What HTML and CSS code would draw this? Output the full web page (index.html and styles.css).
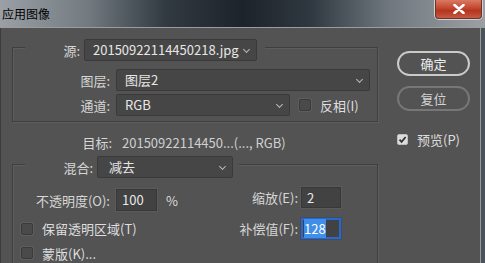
FILE: index.html
```html
<!DOCTYPE html>
<html lang="zh-CN">

<head>
  <meta charset="UTF-8">
  <title>应用图像</title>
  <link rel="stylesheet" href="styles.css">
</head>

<body>
  <div class="titlebar">
    <div class="title">应用图像</div>
    <div class="close">
      <svg width="12" height="10" viewBox="0 0 12 10">
        <path d="M1.5 1 L10.5 9 M10.5 1 L1.5 9" stroke="#fff" stroke-width="2.6" stroke-linecap="round"/>
      </svg>
    </div>
  </div>

  <div class="dialog">
    <div class="main">
      <!-- 源 -->
      <div class="group group-source">
        <div class="legend legend-source">
          <span class="label">源:</span>
          <div class="select w-source">20150922114450218.jpg<span class="arrow"></span></div>
        </div>
        <div class="row row-layer">
          <span class="label lbl-wide">图层:</span>
          <div class="select w-layer">图层2<span class="arrow"></span></div>
        </div>
        <div class="row row-channel">
          <span class="label lbl-wide">通道:</span>
          <div class="select w-channel">RGB<span class="arrow"></span></div>
          <span class="check"></span>
          <span class="check-text">反相(I)</span>
        </div>
      </div>

      <div class="row row-target">
        <span class="label lbl-target">目标:</span>
        <span class="value">20150922114450...(..., RGB)</span>
      </div>

      <!-- 混合 -->
      <div class="group group-blend">
        <div class="legend legend-blend">
          <span class="label">混合:</span>
          <div class="select w-blend">减去<span class="arrow"></span></div>
        </div>
        <div class="row row-a">
          <div class="left">
            <span class="label lbl-wide">不透明度(O):</span>
            <div class="field w-opacity">100</div>
            <span class="unit">%</span>
          </div>
          <div class="right">
            <span class="label lbl-right">缩放(E):</span>
            <div class="field w-small">2</div>
          </div>
        </div>
        <div class="row row-b">
          <div class="left">
            <span class="check"></span>
            <span class="check-text">保留透明区域(T)</span>
          </div>
          <div class="right">
            <span class="label lbl-right">补偿值(F):</span>
            <div class="field w-small focused"><span class="sel">128</span></div>
          </div>
        </div>
        <div class="row row-c">
          <div class="left">
            <span class="check"></span>
            <span class="check-text">蒙版(K)...</span>
          </div>
        </div>
      </div>
    </div>

    <div class="side">
      <div class="btn btn-ok">确定</div>
      <div class="btn btn-reset">复位</div>
      <div class="preview">
        <span class="check checked">
          <svg width="9" height="9" viewBox="0 0 9 9">
            <path d="M1.5 4.6 L3.6 6.8 L7.6 2" fill="none" stroke="#333" stroke-width="1.8"/>
          </svg>
        </span>
        <span class="check-text">预览(P)</span>
      </div>
    </div>
  </div>
</body>

</html>
```

FILE: styles.css
```css
body {
  margin: 0;
  width: 485px;
  height: 263px;
  overflow: hidden;
  background-color: #4a525b;
  font-family: "Noto Sans CJK SC", sans-serif;
  font-size: 13px;
  color: #dcdcdc;
}

.titlebar {
  display: flex;
  justify-content: space-between;
  align-items: flex-start;
  height: 27px;
  border-bottom: 1px solid #9c9c9c;
  background: linear-gradient(90deg, #9aa0a5 0%, #737b81 18%, #323a42 34%, #1d232a 50%, #2f3840 64%, #6f777e 80%, #9ba0a4 100%);
}

.title {
  padding: 6px 0 0 2px;
  font-size: 12px;
  line-height: 15px;
  color: #000;
}

.close {
  display: flex;
  justify-content: center;
  align-items: center;
  width: 45px;
  height: 18px;
  margin-right: 3px;
  border: 1px solid #6b3428;
  border-top: none;
  border-radius: 0 0 4px 4px;
  background: linear-gradient(180deg, #d87a62 0%, #c5462f 45%, #b4351f 60%, #c65b43 100%);
  box-shadow: 0 0 0 1px #cfd3d6;
}

.dialog {
  display: flex;
  width: 480px;
  height: 235px;
  background-color: #535353;
  border-right: 1px solid #9a9a9a;
  box-shadow: inset 1px 0 #3c3c3c;
}

.main {
  width: 378px;
}

.group {
  margin-left: 12px;
  width: 366px;
  box-sizing: border-box;
  border: 1px solid #3f3f3f;
  box-shadow: 1px 1px 0 #5d5d5d, inset 1px 1px 0 #5d5d5d;
}

.group-source {
  margin-top: 19px;
  height: 75px;
}

.group-blend {
  margin-top: 13px;
  height: 110px;
}

.legend {
  display: flex;
  align-items: center;
  margin-left: 12px;
  height: 22px;
  background-color: #535353;
}

.legend-source {
  width: 240px;
  margin-top: -9px;
}

.legend-source .label {
  width: 55px;
  padding-right: 4px;
}

.legend-blend {
  width: 214px;
  margin-top: -9px;
}

.legend-blend .label {
  width: 68px;
  padding-right: 4px;
}

.label {
  box-sizing: content-box;
  text-align: right;
  white-space: nowrap;
  color: #d6d6d6;
}

.lbl-wide {
  width: 97px;
  padding-right: 6px;
}

.lbl-target {
  width: 112px;
}

.lbl-right {
  width: 67px;
  padding-right: 3px;
}

.row {
  display: flex;
  align-items: center;
}

.row-layer {
  margin-top: 8px;
}

.row-channel {
  margin-top: 3px;
}

.row-target {
  margin-top: 11px;
  height: 18px;
}

.row-target .value {
  margin-left: 10px;
  color: #d0d0d0;
}

.row-a {
  margin-top: 9px;
  align-items: flex-start;
}

.row-b {
  margin-top: 7px;
}

.row-c {
  margin-top: 6px;
  height: 16px;
}

.left {
  display: flex;
  align-items: center;
  width: 218px;
}

.right {
  display: flex;
  align-items: center;
}

.row-a .left {
  margin-top: 2px;
}

.select {
  position: relative;
  box-sizing: border-box;
  height: 22px;
  padding-left: 8px;
  line-height: 20px;
  border: 1px solid #3a3a3a;
  border-radius: 2px;
  background-color: #464646;
  color: #e6e6e6;
  white-space: nowrap;
}

.arrow {
  position: absolute;
  right: 7px;
  top: 7px;
  width: 4px;
  height: 4px;
  border-right: 1.5px solid #b8b8b8;
  border-bottom: 1.5px solid #b8b8b8;
  transform: rotate(45deg);
}

.w-source {
  width: 173px;
}

.w-layer {
  width: 254px;
}

.w-channel {
  width: 174px;
}

.w-blend {
  width: 136px;
  padding-left: 11px;
}

.field {
  box-sizing: border-box;
  height: 22px;
  padding-left: 5px;
  line-height: 20px;
  border: 1px solid #383838;
  background-color: #424242;
  color: #e8e8e8;
  box-shadow: 0 0 0 1px #5a5a5a;
}

.w-opacity {
  width: 41px;
}

.w-small {
  width: 40px;
  height: 21px;
  line-height: 19px;
}

.focused {
  height: 21px;
  padding-left: 1px;
  border: 2px solid #2a67cc;
  line-height: 17px;
  box-shadow: 0 0 0 1px #3c4d66;
}

.sel {
  background-color: #3f8eea;
  color: #fff;
}

.unit {
  margin-left: 9px;
}

.check {
  display: inline-flex;
  justify-content: center;
  align-items: center;
  box-sizing: border-box;
  width: 12px;
  height: 12px;
  border: 1px solid #3a3a3a;
  border-radius: 2px;
  background-color: #4a4a4a;
  box-shadow: 0 0 0 1px #5e5e5e;
}

.check-text {
  margin-left: 9px;
  color: #dedede;
  white-space: nowrap;
}

.row-channel .check {
  margin-left: 9px;
}

.row-b .check,
.row-c .check {
  margin-left: 8px;
}

.side {
  display: flex;
  flex-direction: column;
  padding: 23px 0 0 19px;
}

.btn {
  box-sizing: border-box;
  width: 73px;
  height: 25px;
  border-radius: 13px;
  text-align: center;
  line-height: 21px;
  font-size: 13px;
}

.btn-ok {
  border: 2px solid #cacaca;
  color: #ececec;
}

.btn-reset {
  margin-top: 10px;
  border: 2px solid #777;
  color: #d4d4d4;
}

.preview {
  display: flex;
  align-items: center;
  margin-top: 19px;
}

.checked {
  width: 11px;
  height: 11px;
  border-color: #bdbdbd;
  background-color: #dcdcdc;
  box-shadow: none;
}
```
